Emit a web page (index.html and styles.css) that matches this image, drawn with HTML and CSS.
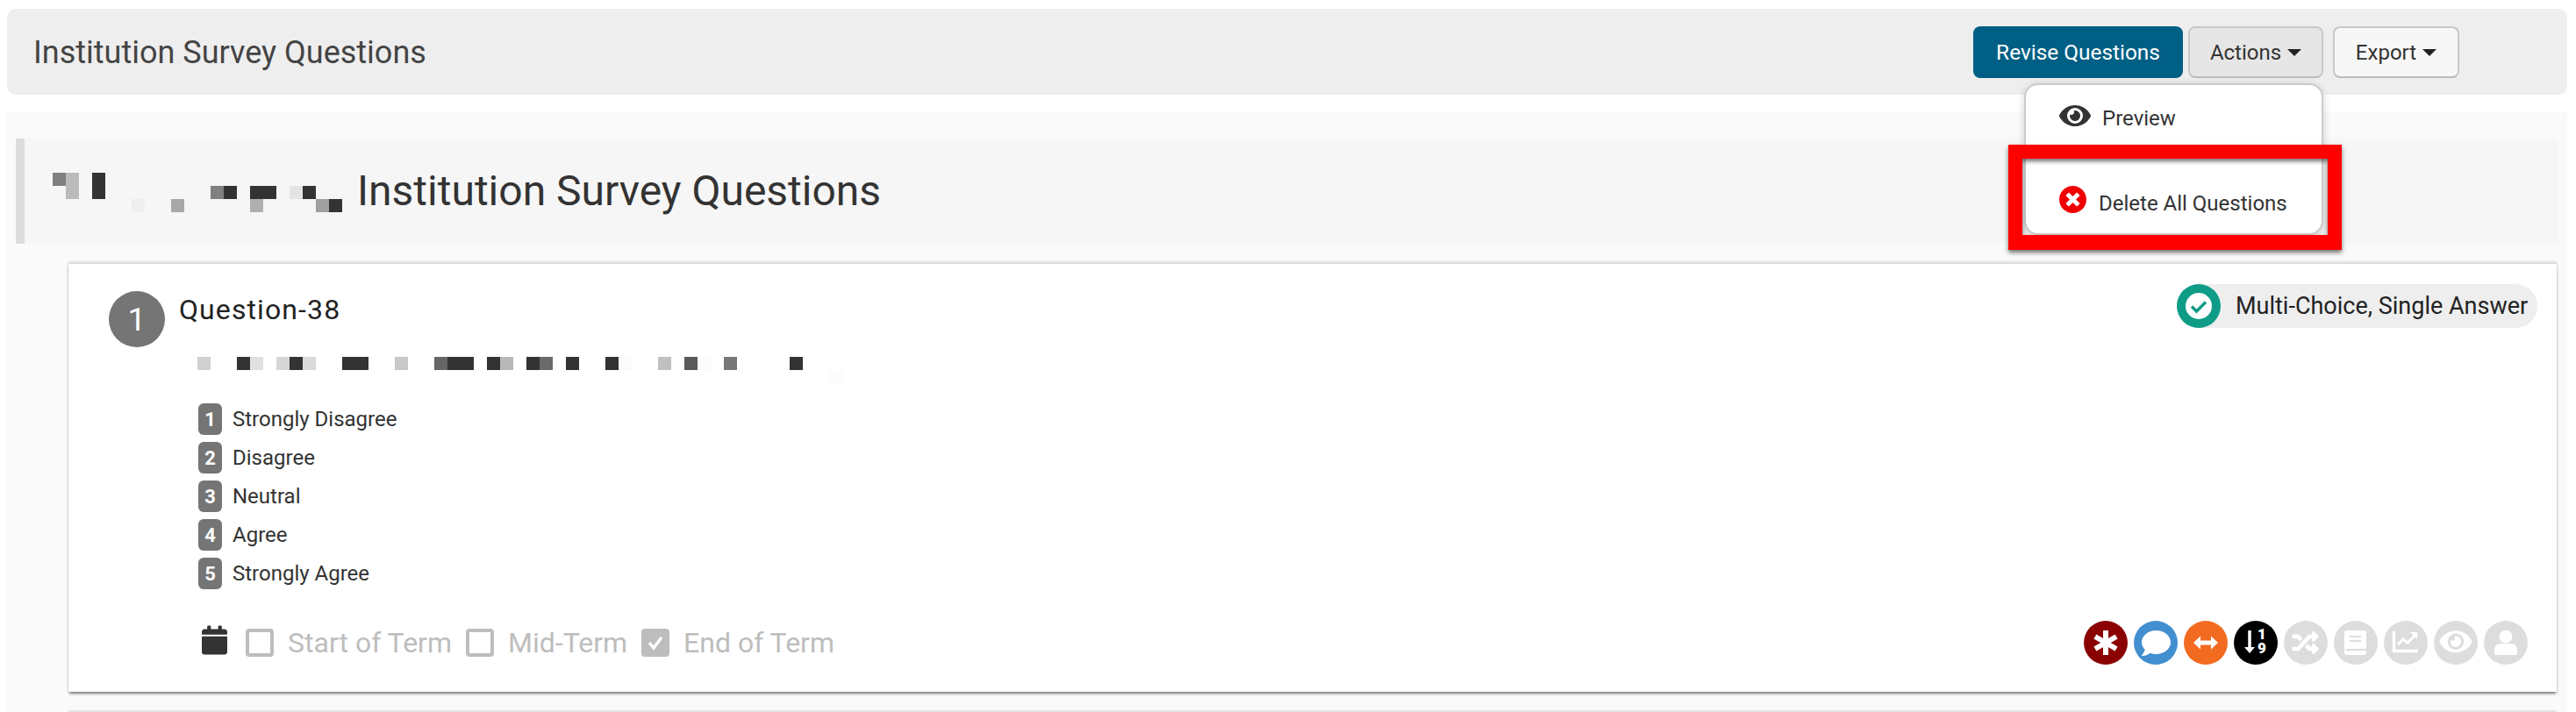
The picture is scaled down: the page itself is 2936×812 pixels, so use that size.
FILE: index.html
```html
<!DOCTYPE html>
<html lang="en">
<head>
<meta charset="utf-8">
<title>Institution Survey Questions</title>
<link rel="stylesheet" href="styles.css">
</head>
<body>
<header class="toolbar">
  <h2 class="toolbar-title">Institution Survey Questions</h2>
  <div class="toolbar-actions">
    <button class="btn btn-primary">Revise Questions</button>
    <div class="menu-wrap">
      <button class="btn btn-active">Actions<span class="caret"></span></button>
      <div class="menu">
        <div class="menu-item menu-preview">
          <svg class="menu-eye" viewBox="0 0 576 512"><path fill="#333" d="M572.52 241.4C518.29 135.59 410.93 64 288 64S57.68 135.64 3.48 241.41a32.35 32.35 0 0 0 0 29.19C57.71 376.41 165.07 448 288 448s230.32-71.64 284.52-177.41a32.35 32.35 0 0 0 0-29.19zM288 400a144 144 0 1 1 144-144 143.93 143.93 0 0 1-144 144zm0-240a95.31 95.31 0 0 0-25.31 3.79 47.85 47.85 0 0 1-66.9 66.9A95.78 95.78 0 1 0 288 160z"/></svg>
          <span>Preview</span>
        </div>
        <div class="menu-item menu-delete">
          <svg class="menu-x" viewBox="8 8 496 496"><path fill="#f00000" d="M256 8C119 8 8 119 8 256s111 248 248 248 248-111 248-248S393 8 256 8zm121.6 313.1c4.7 4.7 4.7 12.3 0 17L338 377.6c-4.7 4.7-12.3 4.7-17 0L256 312l-65.1 65.6c-4.7 4.7-12.3 4.7-17 0L134.4 338c-4.7-4.7-4.7-12.3 0-17l65.6-65-65.6-65.1c-4.7-4.7-4.7-12.3 0-17l39.6-39.6c4.7-4.7 12.3-4.7 17 0l65 65.7 65.1-65.6c4.7-4.7 12.3-4.7 17 0l39.6 39.6c4.7 4.7 4.7 12.3 0 17L312 256l65.6 65.1z"/></svg>
          <span>Delete All Questions</span>
        </div>
      </div>
      <div class="highlight"></div>
    </div>
    <button class="btn btn-plain">Export<span class="caret"></span></button>
  </div>
</header>

<main class="panel">
  <section class="heading">
    <svg class="redact-title" width="330" height="45" viewBox="0 0 330 45" shape-rendering="crispEdges">
      <rect x="0" y="0" width="15" height="15" fill="#808080"/>
      <rect x="15" y="0" width="15" height="30" fill="#bbbbbb"/>
      <rect x="45" y="0" width="15" height="30" fill="#333333"/>
      <rect x="90" y="30" width="15" height="15" fill="#eeeeee"/>
      <rect x="135" y="30" width="15" height="15" fill="#a8a8a8"/>
      <rect x="180" y="15" width="15" height="15" fill="#808080"/>
      <rect x="195" y="15" width="15" height="15" fill="#333333"/>
      <rect x="225" y="15" width="30" height="15" fill="#333333"/>
      <rect x="225" y="30" width="15" height="15" fill="#b0b0b0"/>
      <rect x="270" y="15" width="15" height="15" fill="#e4e4e4"/>
      <rect x="285" y="15" width="15" height="15" fill="#333333"/>
      <rect x="300" y="30" width="15" height="15" fill="#a0a0a0"/>
      <rect x="315" y="30" width="15" height="15" fill="#333333"/>
    </svg>
    <h1 class="heading-text">Institution Survey Questions</h1>
  </section>

  <article class="card">
    <div class="card-head">
      <span class="q-num">1</span>
      <h3 class="q-title">Question-38</h3>
      <div class="type-pill">
        <span class="type-icon">
          <svg viewBox="0 0 30 30" width="30" height="30"><circle cx="15" cy="15" r="15" fill="#fff"/><path d="M7 15.5l5.5 5.5L23 10.5" fill="none" stroke="#0e9c87" stroke-width="3.4"/></svg>
        </span>
        <span class="type-label">Multi-Choice, Single Answer</span>
      </div>
    </div>

    <svg class="redact-question" width="735" height="30" viewBox="0 0 735 30" shape-rendering="crispEdges">
      <rect x="0" y="0" width="15" height="15" fill="#d0d0d0"/>
      <rect x="45" y="0" width="15" height="15" fill="#333333"/>
      <rect x="60" y="0" width="15" height="15" fill="#e0e0e0"/>
      <rect x="90" y="0" width="15" height="15" fill="#d6d6d6"/>
      <rect x="105" y="0" width="15" height="15" fill="#333333"/>
      <rect x="120" y="0" width="15" height="15" fill="#dadada"/>
      <rect x="165" y="0" width="30" height="15" fill="#333333"/>
      <rect x="225" y="0" width="15" height="15" fill="#c8c8c8"/>
      <rect x="270" y="0" width="15" height="15" fill="#666666"/>
      <rect x="285" y="0" width="30" height="15" fill="#333333"/>
      <rect x="330" y="0" width="15" height="15" fill="#333333"/>
      <rect x="345" y="0" width="15" height="15" fill="#b8b8b8"/>
      <rect x="375" y="0" width="15" height="15" fill="#333333"/>
      <rect x="390" y="0" width="15" height="15" fill="#6a6a6a"/>
      <rect x="420" y="0" width="15" height="15" fill="#333333"/>
      <rect x="465" y="0" width="15" height="15" fill="#333333"/>
      <rect x="480" y="0" width="15" height="15" fill="#fbfbfb"/>
      <rect x="525" y="0" width="15" height="15" fill="#c0c0c0"/>
      <rect x="555" y="0" width="15" height="15" fill="#5a5a5a"/>
      <rect x="570" y="0" width="15" height="15" fill="#fcfcfc"/>
      <rect x="600" y="0" width="15" height="15" fill="#777777"/>
      <rect x="675" y="0" width="15" height="15" fill="#333333"/>
      <rect x="720" y="15" width="15" height="15" fill="#fcfcfc"/>
    </svg>

    <ol class="options">
      <li class="option"><span class="opt-num">1</span><span>Strongly Disagree</span></li>
      <li class="option"><span class="opt-num">2</span><span>Disagree</span></li>
      <li class="option"><span class="opt-num">3</span><span>Neutral</span></li>
      <li class="option"><span class="opt-num">4</span><span>Agree</span></li>
      <li class="option"><span class="opt-num">5</span><span>Strongly Agree</span></li>
    </ol>

    <div class="card-foot">
      <svg class="cal" viewBox="0 0 448 512"><path fill="#333" d="M12 192h424c6.6 0 12 5.4 12 12v260c0 26.5-21.5 48-48 48H48c-26.5 0-48-21.5-48-48V204c0-6.6 5.4-12 12-12zm436-44v-36c0-26.5-21.5-48-48-48h-48V12c0-6.6-5.4-12-12-12h-40c-6.6 0-12 5.4-12 12v52H160V12c0-6.6-5.4-12-12-12h-40c-6.6 0-12 5.4-12 12v52H48C21.5 64 0 85.5 0 112v36c0 6.6 5.4 12 12 12h424c6.6 0 12-5.4 12-12z"/></svg>
      <div class="term"><span class="check"></span><span>Start of Term</span></div>
      <div class="term"><span class="check"></span><span>Mid-Term</span></div>
      <div class="term"><span class="check check-on"><svg viewBox="0 0 32 32" width="32" height="32"><path d="M9 16l5 6 9-12" fill="none" stroke="#fff" stroke-width="3.4"/></svg></span><span>End of Term</span></div>

      <div class="flags">
        <span class="flag flag-red"><svg viewBox="0 0 50 50"><path d="M25 11v28M12.9 18l24.2 14M37.1 18L12.9 32" stroke="#fff" stroke-width="6" fill="none"/></svg></span>
        <span class="flag flag-blue"><svg viewBox="-9 -9 50 50"><g transform="scale(.0645)"><path fill="#fff" d="M256 32C114.6 32 0 125.1 0 240c0 49.6 21.4 95 57 130.7C44.5 421.1 2.7 466 2.2 466.5c-2.2 2.3-2.8 5.7-1.5 8.7S4.8 480 8 480c66.3 0 116-31.8 140.6-51.4 32.7 12.3 69 19.4 107.4 19.4 141.4 0 256-93.1 256-208S397.4 32 256 32z"/></g></svg></span>
        <span class="flag flag-orange"><svg viewBox="0 0 50 50"><path fill="#fff" d="M11 25l8-7.500v5h12v-5l8 7.500-8 7.500v-5H19v5z"/></svg></span>
        <span class="flag flag-black"><svg viewBox="0 0 50 50"><path d="M18 11v22" stroke="#fff" stroke-width="3.500"/><path fill="#fff" d="M12 30h12l-6 7z"/><text class="flag-digit" x="32" y="21">1</text><text class="flag-digit" x="32" y="37">9</text></svg></span>
        <span class="flag flag-off"><svg viewBox="-164 -170 853 853"><path fill="#fff" d="M504.971 359.029c9.373 9.373 9.373 24.569 0 33.941l-80 79.984c-15.01 15.01-40.971 4.49-40.971-16.971V416h-58.785a12.004 12.004 0 0 1-8.773-3.812l-70.556-75.596 53.333-57.143L352 336h32v-39.981c0-21.438 25.943-31.998 40.971-16.971l80 79.981zM12 176h84l52.781 56.551 53.333-57.143-70.556-75.596A11.999 11.999 0 0 0 122.785 96H12c-6.627 0-12 5.373-12 12v56c0 6.627 5.373 12 12 12zm372 0v39.984c0 21.46 25.961 31.98 40.971 16.971l80-79.984c9.373-9.373 9.373-24.569 0-33.941l-80-79.981C409.943 24.021 384 34.582 384 56.019V96h-58.785a12.004 12.004 0 0 0-8.773 3.812L96 336H12c-6.627 0-12 5.373-12 12v56c0 6.627 5.373 12 12 12h110.785c3.326 0 6.503-1.381 8.773-3.812L352 176h32z"/></svg></span>
        <span class="flag flag-off"><svg viewBox="0 0 50 50"><rect x="12" y="11" width="25" height="28" rx="3" fill="#fff"/><path d="M18 18h13M18 23h13M14 33h23" stroke="#ddd" stroke-width="2"/></svg></span>
        <span class="flag flag-off"><svg viewBox="0 0 50 50"><path d="M11.500 12v22.500H39" fill="none" stroke="#fff" stroke-width="3.500"/><path d="M16 27l6-6 5 4 8-8" fill="none" stroke="#fff" stroke-width="3"/><path fill="#fff" d="M30 13h8v8z"/></svg></span>
        <span class="flag flag-off"><svg viewBox="-100 -112 776 776"><path fill="#fff" d="M572.52 241.4C518.29 135.59 410.93 64 288 64S57.68 135.64 3.48 241.41a32.35 32.35 0 0 0 0 29.19C57.71 376.41 165.07 448 288 448s230.32-71.64 284.52-177.41a32.35 32.35 0 0 0 0-29.19zM288 400a144 144 0 1 1 144-144 143.93 143.93 0 0 1-144 144zm0-240a95.31 95.31 0 0 0-25.31 3.79 47.85 47.85 0 0 1-66.9 66.9A95.78 95.78 0 1 0 288 160z"/></svg></span>
        <span class="flag flag-off"><svg viewBox="0 0 50 50"><circle cx="25" cy="18" r="7.500" fill="#fff"/><path fill="#fff" d="M12 37v-4c0-4 3-7 7-7h12c4 0 7 3 7 7v4c0 1.500-1 2-2 2H14c-1 0-2-.5-2-2z"/></svg></span>
      </div>
    </div>
  </article>
  <div class="card card-next"></div>
</main>
</body>
</html>
```

FILE: styles.css
```css
* { box-sizing: border-box; }
html, body { margin: 0; padding: 0; height: 812px; overflow: hidden; background: #fff; }
body { font-family: Roboto, "Liberation Sans", sans-serif; color: #333; }
h1, h2, h3, ol { margin: 0; padding: 0; font-weight: 400; }

.toolbar {
  margin: 10px 10px 0 8px;
  height: 98px;
  background: #eee;
  border-radius: 10px;
  padding: 20px 123px 0 30px;
  display: flex;
  justify-content: space-between;
  align-items: flex-start;
}
.toolbar-title { font-size: 36px; line-height: 42px; color: #444; margin-top: 9px; }
.toolbar-actions { display: flex; align-items: flex-start; }

.btn {
  height: 59px;
  font: 400 24px Roboto, sans-serif;
  border-radius: 8px;
  color: #333;
  padding: 0;
  display: flex;
  align-items: center;
  justify-content: center;
  border: 2px solid #c8c8c8;
  border-bottom-color: #bbb;
}
.btn-primary { width: 239px; background: #005f85; border: none; color: #fff; font-size: 24.4px; }
.btn-active { width: 154px; background: #e6e6e6; }
.btn-plain { width: 144px; margin-left: 11px; background: #f7f7f7; }
.caret {
  width: 0; height: 0; margin-left: 7px;
  border-left: 8px solid transparent;
  border-right: 8px solid transparent;
  border-top: 8px solid #222;
}

.menu-wrap { position: relative; margin-left: 6px; }
.menu {
  position: absolute;
  top: 65px;
  right: 0;
  width: 341px;
  height: 173px;
  background: #fff;
  border: 2px solid #ccc;
  border-radius: 16px;
  box-shadow: 0 2px 10px rgba(0, 0, 0, .18);
  z-index: 2;
}
.menu-item { position: absolute; left: 38px; display: flex; align-items: center; font-size: 24px; }
.menu-preview { top: 24px; gap: 13px; }
.menu-delete { top: 121px; gap: 14px; }
.menu-eye { width: 36px; height: 32px; margin-top: -6px; }
.menu-x { width: 31px; height: 31px; margin-top: -9px; }

.highlight {
  position: absolute;
  top: 135px;
  left: -205px;
  width: 380px;
  height: 120px;
  border: 16px solid #f00;
  border-bottom-width: 17px;
  box-shadow: 0 3px 5px rgba(0, 0, 0, .55), inset 0 3px 5px rgba(0, 0, 0, .55);
  z-index: 3;
}

.panel {
  margin: 20px 10px 0 8px;
  height: 700px;
  background: #fafafa;
  padding-top: 30px;
}
.heading {
  margin: 0 10px;
  height: 120px;
  background: #f6f6f6;
  border-left: 10px solid #ddd;
  padding-left: 32px;
  display: flex;
  align-items: flex-start;
}
.redact-title { margin-top: 39px; flex: none; }
.heading-text { font-size: 48px; line-height: 56px; color: #333; margin: 32px 0 0 17px; }

.card {
  margin: 21px 12px 0 70px;
  height: 490px;
  background: #fff;
  border-top: 2px solid #ddd;
  box-shadow: 0 3px 3px -1px rgba(0, 0, 0, .5), 0 0 3px rgba(0, 0, 0, .16);
  padding: 23px 22px 0 46px;
}
.card-next { height: 40px; box-shadow: none; margin-top: 21px; background: #f4f4f4; border-top: 2px solid #e4e4e4; }

.card-head { display: flex; align-items: flex-start; }
.q-num {
  width: 64px; height: 64px; margin-top: 8px;
  border-radius: 50%;
  background: #757575;
  color: #fff;
  font-size: 37px;
  font-weight: 400;
  display: flex; align-items: center; justify-content: center;
}
.q-title { font-size: 32px; line-height: 38px; letter-spacing: 1.1px; color: #222; margin: 10px 0 0 16px; }
.type-pill {
  margin-left: auto;
  height: 50px;
  width: 411px;
  background: #eee;
  border-radius: 25px;
  display: flex;
  align-items: center;
}
.type-icon {
  width: 50px; height: 50px;
  border-radius: 50%;
  background: #0e9c87;
  display: flex; align-items: center; justify-content: center;
  flex: none;
}
.type-label { font-size: 27px; color: #222; margin-left: 17px; white-space: nowrap; }

.redact-question { display: block; margin: 11px 0 0 101px; }

.options { list-style: none; margin: 23px 0 0 102px; }
.option { display: flex; align-items: center; height: 36px; margin-bottom: 8px; font-size: 24px; }
.opt-num {
  width: 27px; height: 36px;
  border-radius: 6px;
  background: #757575;
  color: #fff;
  font-size: 22px;
  font-weight: 700;
  display: flex; align-items: center; justify-content: center;
  margin-right: 12px;
}

.card-foot { display: flex; align-items: center; margin: 36px 0 0 106px; height: 50px; position: relative; }
.cal { width: 29px; height: 34px; margin-top: -6px; margin-right: 21px; flex: none; }
.term { display: flex; align-items: center; font-size: 32px; color: #bdbdbd; margin-right: 16px; }
.check {
  width: 32px; height: 32px;
  border: 4px solid #bdbdbd;
  border-radius: 4px;
  margin-right: 16px;
  flex: none;
  position: relative;
}
.check-on { background: #bdbdbd; border: 0; }
.check-on svg { display: block; }

.flags { margin-left: auto; margin-right: 11px; display: flex; gap: 7px; }
.flag { width: 50px; height: 50px; border-radius: 50%; display: block; }
.flag svg { display: block; width: 50px; height: 50px; }
.flag-red { background: #8b0000; }
.flag-blue { background: #428fd0; }
.flag-orange { background: #f26b21; }
.flag-black { background: #000; }
.flag-off { background: #ddd; }
.flag-digit { fill: #fff; font: 900 17px Roboto, sans-serif; text-anchor: middle; }
```
